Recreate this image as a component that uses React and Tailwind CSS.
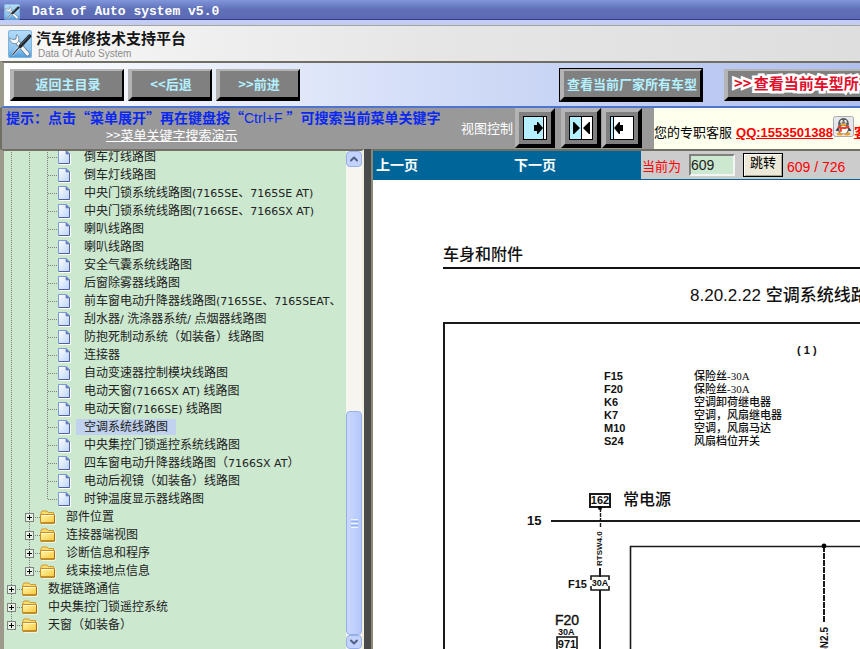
import React from 'react';
import { ChevronDown, ChevronUp } from 'lucide-react';

const treeItems = [
  { level: 2, name: '倒车灯线路图' },
  { level: 2, name: '倒车灯线路图' },
  { level: 2, name: '中央门锁系统线路图(7165SE、7165SE AT)' },
  { level: 2, name: '中央门锁系统线路图(7166SE、7166SX AT)' },
  { level: 2, name: '喇叭线路图' },
  { level: 2, name: '喇叭线路图' },
  { level: 2, name: '安全气囊系统线路图' },
  { level: 2, name: '后窗除雾器线路图' },
  { level: 2, name: '前车窗电动升降器线路图(7165SE、7165SEAT、' },
  { level: 2, name: '刮水器/ 洗涤器系统/ 点烟器线路图' },
  { level: 2, name: '防抱死制动系统（如装备）线路图' },
  { level: 2, name: '连接器' },
  { level: 2, name: '自动变速器控制模块线路图' },
  { level: 2, name: '电动天窗(7166SX AT) 线路图' },
  { level: 2, name: '电动天窗(7166SE) 线路图' },
  { level: 2, name: '空调系统线路图', active: true },
  { level: 2, name: '中央集控门锁遥控系统线路图' },
  { level: 2, name: '四车窗电动升降器线路图（7166SX AT）' },
  { level: 2, name: '电动后视镜（如装备）线路图' },
  { level: 2, name: '时钟温度显示器线路图', last: true },
  { level: 1, name: '部件位置' },
  { level: 1, name: '连接器端视图' },
  { level: 1, name: '诊断信息和程序' },
  { level: 1, name: '线束接地点信息', last: true },
  { level: 0, name: '数据链路通信' },
  { level: 0, name: '中央集控门锁遥控系统' },
  { level: 0, name: '天窗（如装备）', last: true },
];

const legend = [
  ['F15', '保险丝-30A'],
  ['F20', '保险丝-30A'],
  ['K6', '空调卸荷继电器'],
  ['K7', '空调，风扇继电器'],
  ['M10', '空调，风扇马达'],
  ['S24', '风扇档位开关'],
];

const ToolsIcon = ({ className }) => (
  <svg viewBox="0 0 24 27" className={className} preserveAspectRatio="none" aria-hidden="true">
    <defs>
      <linearGradient id="tools-bg" x1="0" y1="0" x2="0" y2="1">
        <stop offset="0" stopColor="#b4dcf8" />
        <stop offset="0.7" stopColor="#8cc4f0" />
        <stop offset="1" stopColor="#4a98dc" />
      </linearGradient>
    </defs>
    <rect x="0.5" y="0.5" width="23" height="26" rx="2" fill="url(#tools-bg)" stroke="#7fb4dc" />
    <path d="M8 10.5L19.5 23" stroke="#5f7688" strokeWidth="4.6" strokeLinecap="round" />
    <path d="M8 10.5L19.5 23" stroke="#f6f8fa" strokeWidth="3.2" strokeLinecap="round" />
    <path d="M1.8 7.5a5 5 0 0 0 7 5.300A5 5 0 0 0 8.600 4.400L8 8.600l-3 .8z" fill="#f6f8fa" stroke="#5f7688" strokeWidth="0.7" />
    <path d="M4.500 24L13 14.500" stroke="#eef1f4" strokeWidth="2.200" />
    <path d="M4.500 24L13 14.500" stroke="#2b3238" strokeWidth="1.100" />
    <path d="M12.500 15.500L21.500 6" stroke="#22282e" strokeWidth="3.600" strokeLinecap="round" />
    <path d="M13 14L20.500 6" stroke="#6d757c" strokeWidth="0.800" strokeLinecap="round" />
  </svg>
);

const FileIcon = () => (
  <svg width="18" height="18" viewBox="0 0 18 18" className="shrink-0" aria-hidden="true">
    <defs>
      <linearGradient id="file-bg" x1="0" y1="0" x2="1" y2="1">
        <stop offset="0" stopColor="#ffffff" />
        <stop offset="1" stopColor="#b9d3f8" />
      </linearGradient>
    </defs>
    <path d="M1 16.5h11.5V6" fill="none" stroke="#ffffff" />
    <path d="M0.5 2.5H8L11.5 6v9.5H0.5z" fill="url(#file-bg)" stroke="#7b9be0" />
    <path d="M11.5 6v9.5H1" fill="none" stroke="#5060a0" />
    <path d="M8 2.5V6h3.5z" fill="#6f86cc" stroke="#5a6cb4" strokeWidth="0.6" />
  </svg>
);

const FolderIcon = () => (
  <svg width="18" height="18" viewBox="0 0 18 18" className="shrink-0" aria-hidden="true">
    <defs>
      <linearGradient id="folder-bg" x1="0" y1="0" x2="1" y2="1">
        <stop offset="0" stopColor="#fff7b0" />
        <stop offset="1" stopColor="#f8c838" />
      </linearGradient>
    </defs>
    <path d="M2 16.2h13.2V6" fill="none" stroke="#fffbe8" />
    <path d="M1 4.5l1-1.5h5l1.2 1.5h5.3v10.5H1z" fill="#fbdc6a" stroke="#d39a2c" />
    <path d="M0.5 6.5h14v8.5h-14z" fill="url(#folder-bg)" stroke="#c98f22" />
    <path d="M1.5 7.5h12" stroke="#fffbd8" />
    <path d="M14.5 7v8H1" fill="none" stroke="#a86c10" />
  </svg>
);

const Guide = ({ branch, end }) => (
  <svg width="18" height="18" viewBox="0 0 18 18" className="shrink-0" shapeRendering="crispEdges" aria-hidden="true">
    <path d={end ? 'M7.5 0v9' : 'M7.5 0v18'} stroke="#808080" strokeDasharray="1 1" />
    {branch && <path d="M8 9.5h10" stroke="#808080" strokeDasharray="1 1" />}
  </svg>
);

const Expander = ({ name, end }) => (
  <button type="button" aria-label={name} className="h-[18px] w-[18px] shrink-0">
    <svg width="18" height="18" viewBox="0 0 18 18" shapeRendering="crispEdges" aria-hidden="true">
      <path d={end ? 'M7.5 0v9' : 'M7.5 0v18'} stroke="#808080" strokeDasharray="1 1" />
      <path d="M13 9.5h5" stroke="#808080" strokeDasharray="1 1" />
      <rect x="3.5" y="5.5" width="8" height="8" fill="#e4f2e4" stroke="#808080" />
      <path d="M5 9.5h5M7.5 7v5" stroke="#000" />
    </svg>
  </button>
);

// latin runs are set a little smaller than the Chinese text around them
const TreeLabel = ({ text }) =>
  text.split(/([!-~][ -~]*)/).map((part, i) =>
    /^[!-~]/.test(part) ? (
      <span key={i} className="font-['DejaVu_Sans',sans-serif] text-[11px]">{part}</span>
    ) : (
      part
    )
  );

const TreeRow = ({ item }) => (
  <li className="flex h-[18px] items-center whitespace-pre">
    {item.level > 0 && <Guide />}
    {item.level > 1 && <Guide />}
    {item.level === 2 ? <Guide branch end={item.last} /> : <Expander name={item.name} end={item.last} />}
    {item.level === 2 ? <FileIcon /> : <FolderIcon />}
    <a href="#" className={`px-2 text-xs leading-4 text-[#222] ${item.active ? 'bg-[#c1d2ee]' : ''}`}>
      <TreeLabel text={item.name} />
    </a>
  </li>
);

const Tree = () => (
  <aside className="flex w-[364px] shrink-0 border-t-2 border-r-2 border-l-4 border-t-[#716f64] border-r-[#f1efe2] border-l-[#9d9a8c] bg-[#cce8cf]">
    <nav className="flex min-w-0 grow flex-col justify-start overflow-hidden">
      <ul className="-mt-[3px]">
        {treeItems.map((item, i) => (
          <TreeRow key={i} item={item} />
        ))}
      </ul>
    </nav>
    <div className="flex w-4 shrink-0 flex-col bg-[#f6f5f0]">
      <button type="button" aria-label="向上" className="flex h-4 shrink-0 items-center justify-center rounded-sm border border-[#98b0e8] bg-[#c3d3fd]">
        <ChevronUp size={12} strokeWidth={4} className="text-[#4d6185]" />
      </button>
      <div className="grow-[245] basis-0" />
      <div className="flex grow-[222] basis-0 flex-col items-center justify-center gap-px rounded-sm border border-[#98b0e8] bg-linear-to-r from-[#cad8ff] to-[#b4c8fa]">
        <i className="h-px w-[7px] bg-[#eef4fe]" />
        <i className="h-px w-[7px] bg-[#8cb0f8]" />
        <i className="h-px w-[7px] bg-[#eef4fe]" />
        <i className="h-px w-[7px] bg-[#8cb0f8]" />
        <i className="h-px w-[7px] bg-[#eef4fe]" />
      </div>
      <button type="button" aria-label="向下" className="flex h-3.5 shrink-0 items-center justify-center rounded-sm border border-[#98b0e8] bg-[#c3d3fd]">
        <ChevronDown size={12} strokeWidth={4} className="text-[#4d6185]" />
      </button>
    </div>
  </aside>
);

const ToolButton = ({ className, children }) => (
  <button
    type="button"
    className={`h-8 shrink-0 border-t-2 border-r-2 border-b-4 border-l-4 border-t-[#b4b4b4] border-r-black border-b-black border-l-[#b4b4b4] bg-[#808080] text-[13px] leading-4 font-bold whitespace-nowrap text-[#b4f0ff] ${className}`}
  >
    {children}
  </button>
);

const ViewButton = ({ label, className, children }) => (
  <button
    type="button"
    aria-label={label}
    className={`flex h-10 w-10 shrink-0 items-center justify-center border-4 border-t-[#b4b4b4] border-r-black border-b-black border-l-[#b4b4b4] bg-[#808080] ${className}`}
  >
    <svg width="24" height="24" viewBox="0 0 24 24" aria-hidden="true">
      {children}
      <rect x="0.5" y="0.5" width="23" height="23" fill="none" stroke="#000" />
    </svg>
  </button>
);

const Penguin = () => (
  <svg width="21" height="21" viewBox="0 0 21 21" className="mb-1 shrink-0" aria-hidden="true">
    <rect x="0.5" y="0.5" width="20" height="20" rx="2" fill="#e6e8ec" stroke="#a8abb0" />
    <ellipse cx="7" cy="17.8" rx="3.2" ry="1.6" fill="#f59a16" />
    <ellipse cx="14" cy="17.8" rx="3.2" ry="1.6" fill="#f59a16" />
    <path d="M5.5 10.500L2.500 14.800l2.500.2zM15.500 10.500L18.500 14.800l-2.500.2z" fill="#3a4046" />
    <ellipse cx="10.500" cy="13" rx="5.800" ry="4.800" fill="#4b5158" />
    <ellipse cx="10.500" cy="13.600" rx="4.400" ry="4" fill="#fff" />
    <path d="M5.200 9.500C4.800 4.800 7.200 2 10.500 2s5.700 2.800 5.300 7.500z" fill="#555b62" />
    <ellipse cx="8.700" cy="5.800" rx="1.500" ry="1.900" fill="#fff" />
    <ellipse cx="12.300" cy="5.800" rx="1.500" ry="1.900" fill="#fff" />
    <circle cx="9.200" cy="6.100" r="0.700" />
    <circle cx="11.800" cy="6.100" r="0.700" />
    <ellipse cx="10.500" cy="8.700" rx="3.200" ry="1.100" fill="#f8a820" />
    <path d="M4.800 9.500c3.400 1.900 8 1.900 11.400 0v2c-2.800 1.500-5.800 1.700-7.400 1.300V15.800H6.500v-3.500l-1.700-.8z" fill="#ea3b28" />
  </svg>
);

const Circuit = () => (
  <svg width="415" height="170" viewBox="0 0 415 170" className="block max-w-none font-['Liberation_Sans','Noto_Sans_CJK_SC',sans-serif]">
    <g fill="none" stroke="#1a1a1a" strokeWidth="2">
      <path d="M106 41H415" />
      <rect x="145" y="14" width="20" height="13" />
      <path d="M155.500 28v20" strokeWidth="1.400" strokeDasharray="4 1" />
      <path d="M155 88v9M155 110v60" />
      <path d="M146 100v-4h18v4M146 106v4h18v-4" strokeWidth="1.600" />
      <path d="M185.500 170V66.500H415" strokeWidth="1.600" />
      <path d="M379 66v76" strokeDasharray="6 1" />
      <rect x="112" y="157" width="20" height="20" strokeWidth="1.600" />
    </g>
    <circle cx="155" cy="28" r="2" />
    <circle cx="379" cy="66" r="2.400" />
    <g fill="#111" fontWeight="bold">
      <text x="155" y="24" fontSize="11" textAnchor="middle">162</text>
      <text x="178" y="25" fontSize="16" fontWeight="500">常电源</text>
      <text x="82" y="45" fontSize="13">15</text>
      <text transform="translate(157 86) rotate(-90)" fontSize="8">RTSW4.0</text>
      <text x="123" y="108" fontSize="11">F15</text>
      <text x="155" y="106" fontSize="9" textAnchor="middle">30A</text>
      <text x="110" y="145" fontSize="14" fontWeight="normal" stroke="#111" strokeWidth="0.400">F20</text>
      <text x="113" y="155" fontSize="9">30A</text>
      <text x="122" y="168" fontSize="11" textAnchor="middle">971</text>
      <text transform="translate(383 147) rotate(-90)" fontSize="10" textAnchor="end">GN2.5</text>
    </g>
  </svg>
);

const Page = () => (
  <article className="min-h-0 grow overflow-hidden bg-white pt-[63px] pl-[70px] text-[#111]">
    <h2 className="border-b-2 border-[#111] text-[16px] leading-6 font-medium">车身和附件</h2>
    <h1 className="mt-[15px] pl-[247px] text-[17px] leading-6 font-medium whitespace-nowrap">
      <span className="font-['Liberation_Sans',sans-serif] font-normal">8.20.2.22</span> 空调系统线路图
    </h1>
    <div className="mt-3.5 border-t-2 border-l-2 border-[#1a1a1a] pt-[18px]">
      <p className="pl-[352px] text-[11px] leading-4 font-bold whitespace-nowrap">( 1 )</p>
      <table className="mt-3 ml-[159px]">
        <tbody>
          {legend.map(([code, name], i) => (
            <tr key={i} className="h-[13px] text-[11px] leading-[13px] whitespace-nowrap">
              <th className="w-[90px] p-0 text-left font-['Liberation_Sans',sans-serif] font-bold">{code}</th>
              <td className="p-0 font-['Liberation_Serif','Noto_Sans_CJK_SC',serif] font-medium">{name}</td>
            </tr>
          ))}
        </tbody>
      </table>
      <div className="mt-8">
        <Circuit />
      </div>
    </div>
  </article>
);

export default function App() {
  return (
    <div className="flex h-screen flex-col overflow-hidden bg-[#999] font-['Liberation_Sans','Noto_Sans_CJK_SC',sans-serif]">
      {/* Title bar */}
      <div className="flex h-5 shrink-0 items-center gap-3 border-b border-[#333d8c] bg-linear-to-b from-[#8296dc] via-[#5f70b8] to-[#5b69b4] pt-1 pl-1">
        <ToolsIcon className="h-4 w-4" />
        <span className="font-['Liberation_Mono',monospace] text-[13px] leading-4 font-bold whitespace-nowrap text-white">
          Data of Auto system v5.0
        </span>
      </div>
      <div className="h-[5px] shrink-0 bg-[#c3cdf4]" />

      {/* Brand */}
      <header className="flex h-9 shrink-0 items-center gap-1 border-t border-[#a8a598] bg-linear-to-r from-[#f8f8f8] via-[#e6e6e6] to-[#dedede] pl-2">
        <ToolsIcon className="h-7 w-6" />
        <div className="whitespace-nowrap">
          <p className="font-['Noto_Sans_CJK_SC',sans-serif] text-[15px] leading-5 font-bold text-[#151515]">汽车维修技术支持平台</p>
          <p className="pl-0.5 text-[10px] leading-3 text-[#8c8c8c]">Data Of Auto System</p>
        </div>
      </header>

      {/* Toolbar */}
      <div className="flex h-[47px] shrink-0 items-center gap-1 overflow-hidden border-t-2 border-b-2 border-l-4 border-t-[#716f64] border-b-[#4f74d0] border-l-[#9d9a8c] bg-linear-to-r from-white via-[#d3ddf7] to-[#b0c0ee] pl-1.5 font-['Noto_Sans_CJK_SC',sans-serif]">
        <ToolButton className="w-[114px]">返回主目录</ToolButton>
        <ToolButton className="w-[84px]">&lt;&lt;后退</ToolButton>
        <ToolButton className="w-[84px]">&gt;&gt;前进</ToolButton>
        <ToolButton className="ml-auto w-[142px] outline outline-black">查看当前厂家所有车型</ToolButton>
        <div className="ml-[18px] w-[136px] shrink-0">
          <ToolButton className="w-[180px] pl-1.5 text-left">
            <span className="text-[15px] text-[#e0102c] [paint-order:stroke] [-webkit-text-stroke:5px_white]">
              <span className="mr-0.5">&gt;&gt;</span>查看当前车型所有
            </span>
          </ToolButton>
        </div>
      </div>

      {/* Hint, view switch, contact */}
      <div className="flex h-[41px] shrink-0 overflow-hidden border-l-2 border-[#716f64] bg-[#999] whitespace-nowrap">
        <div className="pl-1 font-['Noto_Sans_CJK_SC',sans-serif]">
          <p className="text-[14px] leading-[18px] font-bold text-[#0a28f0]">
            提示：点击“菜单展开”再在键盘按“<span className="font-['Liberation_Sans',sans-serif] font-normal">Ctrl+F </span>”可搜索当前菜单关键字
          </p>
          <a href="#" className="ml-[100px] block text-[13px] leading-4 text-white underline">&gt;&gt;菜单关键字搜索演示</a>
        </div>
        <span className="mr-0.5 ml-auto self-center text-[13px] text-white">视图控制</span>
        <div className="flex shrink-0 gap-px pr-3">
          <ViewButton label="展开菜单" className="mr-[5px]">
            <rect x="1" y="1" width="20" height="22" fill="#b4f0ff" />
            <rect x="20" y="1" width="1" height="22" fill="#000" />
            <rect x="21" y="1" width="2" height="22" fill="#fff" />
            <path d="M11 9h3V6h1l5 6-5 6h-1v-3h-3z" />
          </ViewButton>
          <ViewButton label="并列显示">
            <rect x="1" y="1" width="11" height="22" fill="#b4f0ff" />
            <rect x="12" y="1" width="11" height="22" fill="#fff" />
            <rect x="12" y="1" width="1" height="22" fill="#000" />
            <path d="M4 6h1l6 6-6 6H4zM21 6h-1l-6 6 6 6h1z" />
          </ViewButton>
          <ViewButton label="收起菜单">
            <rect x="1" y="1" width="3" height="22" fill="#b4f0ff" />
            <rect x="4" y="1" width="19" height="22" fill="#fff" />
            <rect x="3" y="1" width="1" height="22" fill="#000" />
            <path d="M13 9h-3V6H9l-5 6 5 6h1v-3h3z" />
          </ViewButton>
        </div>
        <div className="flex w-[206px] shrink-0 items-end overflow-hidden bg-[#ffffee] pb-2 text-[13px] leading-4">
          <span>您的专职客服</span>
          <a href="#" className="ml-1 flex items-end font-bold text-[#f00]">
            <span className="underline">QQ:1553501388</span>
            <Penguin />
            <span className="underline">客服</span>
          </a>
        </div>
      </div>

      {/* Menu tree and document */}
      <main className="flex min-h-0 grow">
        <Tree />
        <div className="w-[7px] shrink-0 bg-[#4a4a4a]" />
        <section className="flex min-w-0 grow flex-col border-t-2 border-l-2 border-t-[#716f64] border-l-[#8c8878]">
          <div className="flex h-[29px] shrink-0 bg-[#069] text-[14px] font-bold text-white">
            <nav className="flex grow items-center gap-24 pl-[3px]">
              <a href="#">上一页</a>
              <a href="#">下一页</a>
            </nav>
            <form className="mb-px flex w-[219px] shrink-0 items-center bg-[#ccc] pl-px font-normal text-[#f00]">
              <label htmlFor="page" className="pt-1 text-[13px]">当前为</label>
              <input
                id="page"
                type="text"
                defaultValue="609"
                className="ml-2 h-[22px] w-[46px] border-2 border-t-[#808080] border-r-[#f4f4f4] border-b-[#f4f4f4] border-l-[#808080] bg-[#cce8cf] text-[14px] text-[#222]"
              />
              <button type="button" className="ml-2 h-6 w-10 border border-black bg-[#ece9d8] pb-1 text-[13px] leading-4 text-black shadow-[inset_1px_1px_#fff,inset_-1px_-1px_#aca899]">
                跳转
              </button>
              <span className="pt-1 pl-1">609 / 726</span>
            </form>
          </div>
          <Page />
        </section>
      </main>
    </div>
  );
}
